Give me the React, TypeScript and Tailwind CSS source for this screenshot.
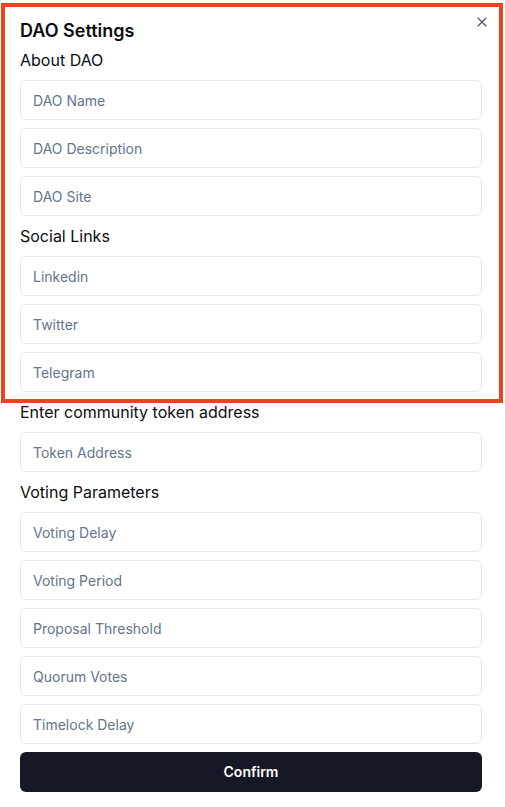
import { X } from "lucide-react";

const about = ["DAO Name", "DAO Description", "DAO Site"];
const social = ["Linkedin", "Twitter", "Telegram"];
const voting = [
  "Voting Delay",
  "Voting Period",
  "Proposal Threshold",
  "Quorum Votes",
  "Timelock Delay",
];

function Field({ placeholder }: { placeholder: string }) {
  return (
    <input
      placeholder={placeholder}
      className="h-10 w-full rounded-md border border-[#e2e8f0] bg-white px-3 text-sm text-slate-900 placeholder:text-[#64748b] outline-none"
    />
  );
}

function Section({ title, fields }: { title: string; fields: string[] }) {
  return (
    <div className="flex flex-col gap-2">
      <h3 className="text-base leading-6 text-[#0b0d12]">{title}</h3>
      {fields.map((f) => (
        <Field key={f} placeholder={f} />
      ))}
    </div>
  );
}

export default function App() {
  return (
    <div
      className="relative min-h-[807px] w-full bg-white"
      style={{ fontFamily: "Inter, 'Noto Sans', sans-serif" }}
    >
      <div className="flex flex-col pl-5 pr-[23px] pt-[17px]">
        <h2 className="text-lg font-semibold leading-7 text-[#0b0d12]">
          DAO Settings
        </h2>
        <div className="mt-[3px] flex flex-col gap-2">
          <Section title="About DAO" fields={about} />
          <Section title="Social Links" fields={social} />
          <Section title="Enter community token address" fields={["Token Address"]} />
          <Section title="Voting Parameters" fields={voting} />
          <button className="h-10 w-full rounded-md bg-[#151927] text-sm font-semibold text-white">
            Confirm
          </button>
        </div>
      </div>

      <button className="absolute right-[15px] top-[14px] text-[#4b5563]">
        <X className="h-4 w-4" strokeWidth={1.75} />
      </button>

      <div className="pointer-events-none absolute left-[1px] top-[3px] h-[400px] w-[502px] border-4 border-[#e6461e]" />
    </div>
  );
}
